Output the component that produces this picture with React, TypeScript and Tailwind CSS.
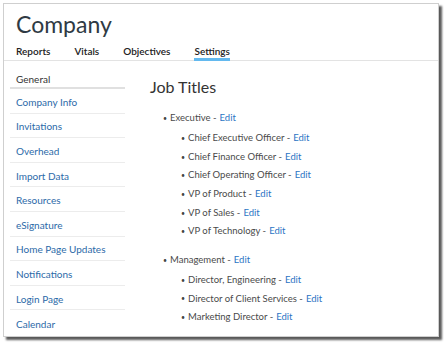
import React from "react";

const sideItems = [
  "Company Info",
  "Invitations",
  "Overhead",
  "Import Data",
  "Resources",
  "eSignature",
  "Home Page Updates",
  "Notifications",
  "Login Page",
  "Calendar",
];

const groups = [
  {
    name: "Executive",
    items: [
      "Chief Executive Officer",
      "Chief Finance Officer",
      "Chief Operating Officer",
      "VP of Product",
      "VP of Sales",
      "VP of Technology",
    ],
  },
  {
    name: "Management",
    items: ["Director, Engineering", "Director of Client Services", "Marketing Director"],
  },
];

function Row({ label, sub }: { label: string; sub?: boolean }) {
  return (
    <div className={`flex items-center h-[18.6px] ${sub ? "pl-[31px]" : "pl-[13px]"}`}>
      <span className="text-[7px] mr-[3px] text-[#444]">•</span>
      <span className="text-[#4a4a4a]">{label} - </span>
      <span className="text-[#2b74c4] ml-[3px]">Edit</span>
    </div>
  );
}

export default function App() {
  return (
    <div
      className="w-[444px] h-[348px] bg-white overflow-hidden"
      style={{ fontFamily: "Lato, 'Open Sans', Arial, sans-serif" }}
    >
      <div className="ml-[3px] mt-[3px] w-[436px] h-[334px] border border-[#cfcfcf] bg-white shadow-[3px_3px_2px_rgba(0,0,0,0.65)] overflow-hidden flex flex-col">
        <div className="pl-[12px] pt-[6px] h-[37px] text-[23px] leading-[28px] text-[#2f3a44]">
          Company
        </div>
        <div className="flex gap-[24px] pl-[12px] h-[20px] border-b border-[#e3e3e3] text-[10px] font-semibold text-[#222]">
          <div className="leading-[14px] pt-[3px]">Reports</div>
          <div className="leading-[14px] pt-[3px]">Vitals</div>
          <div className="leading-[14px] pt-[3px]">Objectives</div>
          <div className="leading-[14px] pt-[3px] border-b-[3px] border-[#63b9ef] h-[20px]">Settings</div>
        </div>
        <div className="flex flex-1">
          <div className="ml-[6px] w-[115px] text-[10px]">
            <div className="h-[28px] pt-[11px] pl-[6px] leading-[14px] text-[#333] border-b-[2px] border-[#e0e0e0]">
              General
            </div>
            {sideItems.map((s, i) => (
              <div
                key={s}
                className={`h-[24.6px] flex items-center pl-[6px] pt-[3px] text-[#2c6aa8] ${i < sideItems.length - 1 ? "border-b border-[#ececec]" : ""}`}
              >
                {s}
              </div>
            ))}
          </div>
          <div className="ml-[25px] flex-1">
            <div className="pt-[16px] text-[16px] leading-[20px] text-[#333]">Job Titles</div>
            <div className="mt-[12px] text-[9.5px]">
              {groups.map((g, gi) => (
                <div key={g.name} className={gi > 0 ? "mt-[10px]" : ""}>
                  <div className="mb-[1.5px]">
                    <Row label={g.name} />
                  </div>
                  {g.items.map((it) => (
                    <Row key={it} label={it} sub />
                  ))}
                </div>
              ))}
            </div>
          </div>
        </div>
      </div>
    </div>
  );
}
